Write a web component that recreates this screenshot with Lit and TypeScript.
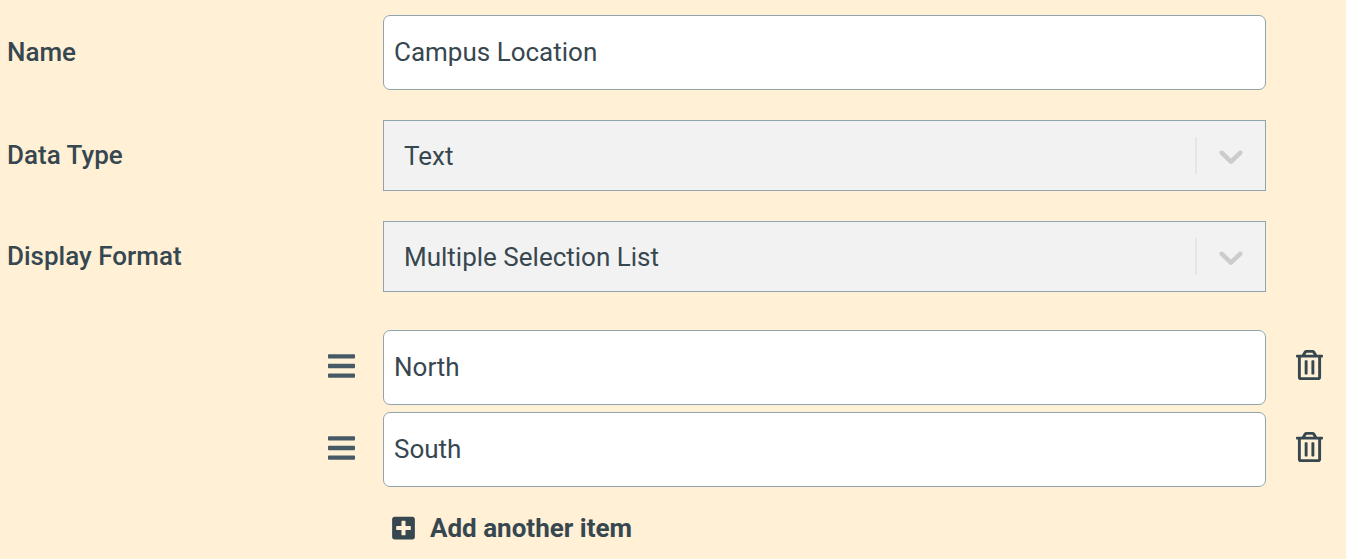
import { LitElement, html, css, svg } from "lit";
import { customElement, state } from "lit/decorators.js";

@customElement("app-root")
export class AppRoot extends LitElement {
  @state() private items = ["North", "South"];

  static styles = css`
    :host {
      display: block;
      box-sizing: border-box;
      min-height: 100vh;
      padding: 15px 23px 15px 7px;
      background: #fff0d6;
      color: #37474f;
      font-family: Roboto, sans-serif;
      font-size: 26px;
      line-height: 32px;
    }
    *, *::before { box-sizing: border-box; }
    form { display: grid; gap: 30px; }
    .row {
      display: grid;
      grid-template-columns: calc(100% * 2 / 7) minmax(0, 1fr) 57px;
      align-items: center;
    }
    .label { font-weight: 500; padding-bottom: 1px; }
    input, select {
      display: block;
      width: 100%;
      margin: 0;
      font: inherit;
      color: inherit;
      border: 1px solid #90a4ae;
      outline-color: #607d8b;
    }
    input {
      height: 75px;
      padding: 0 10px 2px;
      border-radius: 7px;
      background: #fff;
    }
    .select { display: grid; align-items: center; }
    .select > * { grid-area: 1 / 1; }
    select {
      height: 71px;
      padding: 0 80px 0 20px;
      appearance: none;
      border-radius: 0;
      background: #f2f2f2;
      opacity: 1;
    }
    .indicator {
      justify-self: end;
      display: flex;
      align-items: center;
      width: 71px;
      height: 37px;
      border-left: 2px solid #e6e6e6;
      padding-left: 14px;
      pointer-events: none;
    }
    .list { display: grid; gap: 7px; padding-top: 8px; }
    button {
      display: flex;
      align-items: center;
      margin: 0;
      padding: 0;
      border: 0;
      background: none;
      color: inherit;
      font: inherit;
      cursor: pointer;
    }
    .drag, .trash { justify-self: end; }
    .drag { margin-right: 28px; padding-bottom: 3px; color: #455a64; }
    .trash { padding-bottom: 5px; }
    svg { display: block; }
    .add {
      grid-column: 2;
      justify-self: start;
      gap: 15px;
      margin: 18px 0 0 9px;
      font-weight: 700;
    }
  `;

  private chevron = svg`<svg width="40" height="40" viewBox="0 0 20 20" fill="#ccc" aria-hidden="true"><path d="M4.516 7.548c0.436-0.446 1.043-0.481 1.576 0l3.908 3.747 3.908-3.747c0.533-0.481 1.141-0.446 1.574 0 0.436 0.445 0.408 1.197 0 1.615-0.406 0.418-4.695 4.502-4.695 4.502-0.217 0.223-0.502 0.335-0.787 0.335s-0.57-0.112-0.789-0.335c0 0-4.287-4.084-4.695-4.502s-0.436-1.17 0-1.615z"/></svg>`;

  private select(id: string, label: string, value: string) {
    return html`<div class="row">
      <label class="label" for=${id}>${label}</label>
      <div class="select">
        <select id=${id}><option>${value}</option></select>
        <span class="indicator">${this.chevron}</span>
      </div>
    </div>`;
  }

  private remove(index: number) {
    this.items = this.items.filter((_, i) => i !== index);
  }

  render() {
    return html`<form @submit=${(e: Event) => e.preventDefault()}>
      <div class="row">
        <label class="label" for="name">Name</label>
        <input id="name" type="text" .value=${"Campus Location"} />
      </div>
      ${this.select("type", "Data Type", "Text")}
      ${this.select("format", "Display Format", "Multiple Selection List")}
      <div class="list">
        ${this.items.map((item, i) => html`<div class="row">
          <button class="drag" type="button" aria-label="Reorder item">
            <svg width="27" height="32" viewBox="0 0 448 512" fill="currentColor"><path d="M16 132h416c8.837 0 16-7.163 16-16V76c0-8.837-7.163-16-16-16H16C7.163 60 0 67.163 0 76v40c0 8.837 7.163 16 16 16zm0 160h416c8.837 0 16-7.163 16-16v-40c0-8.837-7.163-16-16-16H16c-8.837 0-16 7.163-16 16v40c0 8.837 7.163 16 16 16zm0 160h416c8.837 0 16-7.163 16-16v-40c0-8.837-7.163-16-16-16H16c-8.837 0-16 7.163-16 16v40c0 8.837 7.163 16 16 16z"/></svg>
          </button>
          <input type="text" aria-label="List item" .value=${item} />
          <button class="trash" type="button" aria-label="Delete item" @click=${() => this.remove(i)}>
            <svg width="27" height="30" viewBox="0 0 448 512" preserveAspectRatio="none" fill="currentColor"><path d="M268 416h24a12 12 0 0 0 12-12V188a12 12 0 0 0-12-12h-24a12 12 0 0 0-12 12v216a12 12 0 0 0 12 12zM432 80h-82.410l-34-56.700A48 48 0 0 0 274.410 0H173.590a48 48 0 0 0-41.160 23.300L98.410 80H16A16 16 0 0 0 0 96v16a16 16 0 0 0 16 16h16v336a48 48 0 0 0 48 48h288a48 48 0 0 0 48-48V128h16a16 16 0 0 0 16-16V96a16 16 0 0 0-16-16zM171.840 50.910A6 6 0 0 1 177 48h94a6 6 0 0 1 5.150 2.910L293.610 80H154.390zM368 464H80V128h288zm-212-48h24a12 12 0 0 0 12-12V188a12 12 0 0 0-12-12h-24a12 12 0 0 0-12 12v216a12 12 0 0 0 12 12z"/></svg>
          </button>
        </div>`)}
        <div class="row">
          <button class="add" type="button" @click=${() => (this.items = [...this.items, ""])}>
            <svg width="23" height="26" viewBox="0 0 448 512" fill="currentColor" aria-hidden="true"><path d="M400 32H48C21.500 32 0 53.500 0 80v352c0 26.500 21.500 48 48 48h352c26.500 0 48-21.500 48-48V80c0-26.500-21.500-48-48-48zm-32 252c0 6.600-5.400 12-12 12h-92v92c0 6.600-5.400 12-12 12h-56c-6.600 0-12-5.400-12-12v-92H92c-6.600 0-12-5.400-12-12v-56c0-6.600 5.400-12 12-12h92v-92c0-6.600 5.400-12 12-12h56c6.600 0 12 5.400 12 12v92h92c6.600 0 12 5.400 12 12v56z"/></svg>
            Add another item
          </button>
        </div>
      </div>
    </form>`;
  }
}
